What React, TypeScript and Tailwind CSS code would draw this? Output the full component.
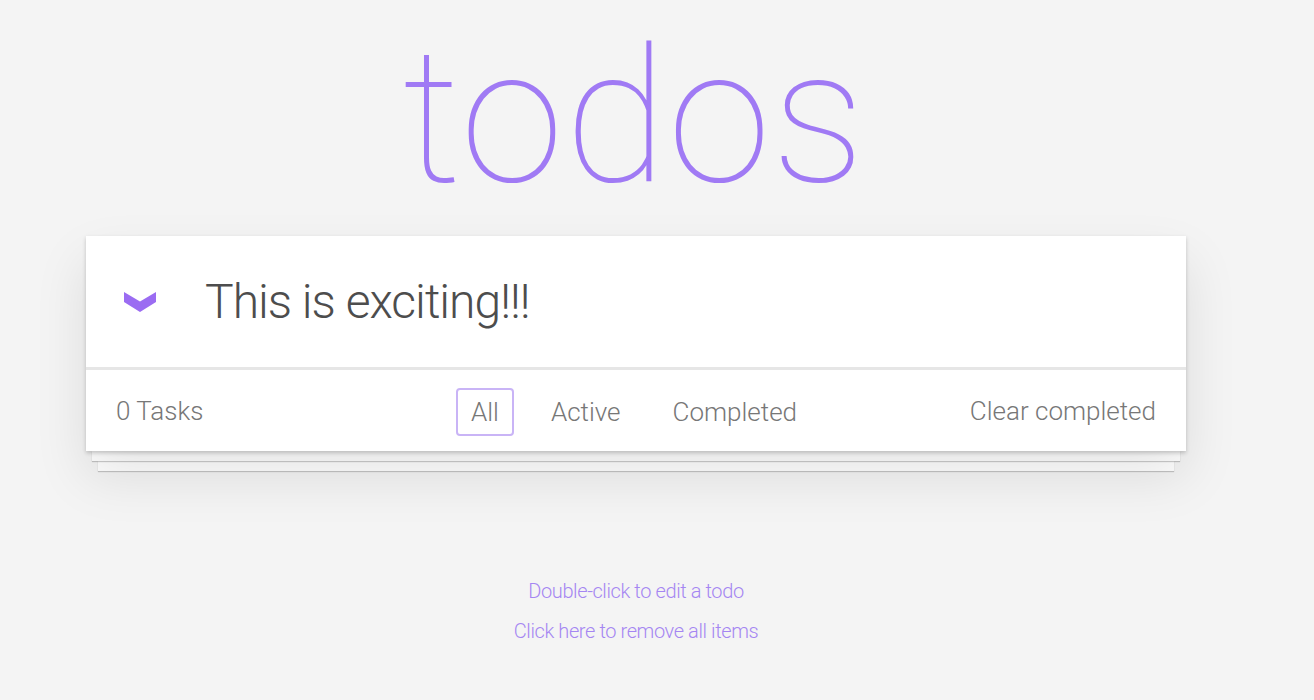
import React from 'react';

const filters = ['All', 'Active', 'Completed'];

const Chevron: React.FC = () => (
  <svg width="32" height="20" viewBox="0 0 32 20" className="shrink-0">
    <path d="M0 0 L16 9.5 L32 0 L32 10 L16 20 L0 10 Z" fill="#9b6cf2" />
  </svg>
);

const App: React.FC = () => {
  const [active, setActive] = React.useState('All');

  return (
    <div
      className="min-h-[700px] w-full bg-[#f4f4f4] text-[#4d4d4d]"
      style={{ fontFamily: '"Helvetica Neue", Roboto, "Liberation Sans", sans-serif' }}
    >
      <div className="ml-[86px] w-[1100px]">
        {/* Title */}
        <h1 className="text-center text-[187px] leading-[236px] font-thin tracking-[1px] text-[#a07af4] pr-[4px]">
          todos
        </h1>

        {/* Card */}
        <div className="relative">
          <div className="relative z-10 bg-white shadow-[0_2px_4px_rgba(0,0,0,0.2),0_25px_50px_rgba(0,0,0,0.1)]">
            <div className="flex h-[134px] items-center border-b-[3px] border-[#e6e6e6]">
              <div className="w-[119px] pl-[38px]">
                <Chevron />
              </div>
              <div className="text-[48px] font-light leading-none tracking-[-1px] text-[#4d4d4d]">
                This is exciting!!!
              </div>
            </div>
            <div className="grid h-[81px] grid-cols-[1fr_auto_1fr] items-center px-[30px] pt-[2px] text-[26px] font-light text-[#777]">
              <span>0 Tasks</span>
              <div className="flex items-center gap-[22px] pr-[4px]">
                {filters.map((f) => (
                  <button
                    key={f}
                    onClick={() => setActive(f)}
                    className={`h-[48px] rounded-[4px] border-2 px-[13px] leading-none ${
                      active === f ? 'border-[#c9b4f6]' : 'border-transparent'
                    }`}
                  >
                    {f}
                  </button>
                ))}
              </div>
              <span className="justify-self-end">Clear completed</span>
            </div>
          </div>
          {/* stacked pages */}
          <div className="relative z-[5] mx-[6px] h-[10px] bg-white shadow-[0_1px_1px_rgba(0,0,0,0.2)]" />
          <div className="mx-[12px] h-[10px] bg-white shadow-[0_1px_1px_rgba(0,0,0,0.2)]" />
        </div>

        {/* Hints */}
        <div className="mt-[108px] flex flex-col items-center gap-[16px] text-[20px] font-light leading-[24px] tracking-[-0.4px] text-[#a586f2]">
          <p>Double-click to edit a todo</p>
          <p className="cursor-pointer">Click here to remove all items</p>
        </div>
      </div>
    </div>
  );
};

export default App;
